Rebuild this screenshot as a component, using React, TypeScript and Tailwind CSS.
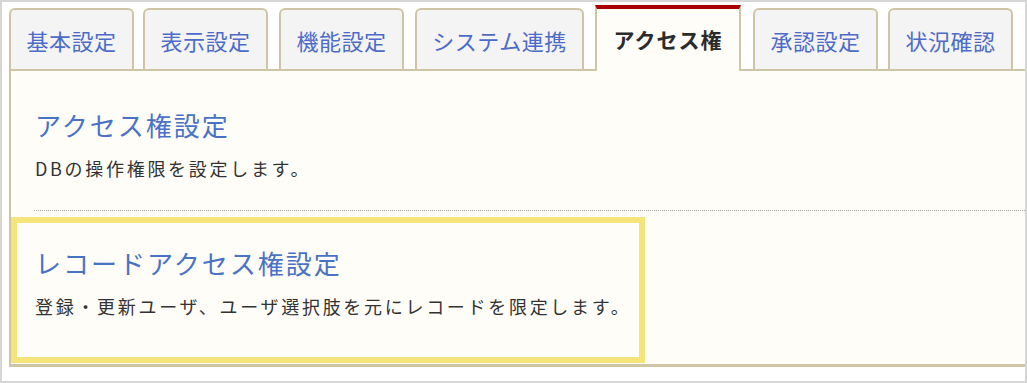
const tabs = [
  { label: "基本設定", className: "w-[125px]" },
  { label: "表示設定", className: "ml-[9px] w-[125px]" },
  { label: "機能設定", className: "ml-[11px] w-[125px]" },
  { label: "システム連携", className: "ml-[11px] w-[169px]" },
  { label: "アクセス権", className: "ml-[11px] w-[146px]", active: true },
  { label: "承認設定", className: "ml-[12px] w-[125px]" },
  { label: "状況確認", className: "ml-[10px] w-[125px]" },
];

const App = () => {
  return (
    <div className="h-[383px] w-[1027px] overflow-hidden border-2 border-[#d6d6d6] bg-white font-['Noto_Sans_CJK_JP','Noto_Sans',sans-serif]">
      <div className="pl-[7px] pt-[3px]">
        {/* tabs */}
        <div className="relative z-10 flex h-[66px] items-end">
          {tabs.map((tab) =>
            tab.active ? (
              <div
                key={tab.label}
                className={`${tab.className} flex h-[66px] shrink-0 items-center justify-center border-x-2 border-t-4 border-x-[#cdc5a5] border-t-[#a80000] bg-[#fefdf8] pb-[2px] text-[21px] font-bold leading-none tracking-[1px] text-[#2b2b2b]`}
              >
                {tab.label}
              </div>
            ) : (
              <div
                key={tab.label}
                className={`${tab.className} mb-[2px] flex h-[61px] shrink-0 items-center justify-center rounded-t-[6px] border-x-2 border-t-2 border-[#cdc5a5] bg-[#f4f4f4] text-[22px] leading-none tracking-[0.5px] text-[#4d6bc8]`}
              >
                {tab.label}
              </div>
            )
          )}
        </div>

        {/* panel */}
        <div className="-mt-[2px] h-[298px] w-[1030px] border-2 border-b-[3px] border-r-0 border-[#cdc5a5] bg-[#fefdf8]">
          <div className="pl-[24px]">
            <h2 className="mt-[41px] text-[26px] leading-none tracking-[2px] text-[#4a72c4]">
              アクセス権設定
            </h2>
            <p className="mt-[21px] text-[18px] leading-none tracking-[2.7px] text-[#333333]">
              DBの操作権限を設定します。
            </p>
          </div>
          <div className="ml-[23px] mr-[6px] mt-[33px] border-t border-dotted border-[#a8a8a8]" />
          <div className="mt-[6px] h-[146px] w-[634px] border-[6px] border-[#f5e47a] pl-[18px]">
            <h2 className="mt-[27px] text-[26px] leading-none tracking-[2px] text-[#4a72c4]">
              レコードアクセス権設定
            </h2>
            <p className="mt-[21px] text-[18px] leading-none tracking-[2.7px] text-[#333333]">
              登録・更新ユーザ、ユーザ選択肢を元にレコードを限定します。
            </p>
          </div>
        </div>
      </div>
    </div>
  );
};

export default App;
